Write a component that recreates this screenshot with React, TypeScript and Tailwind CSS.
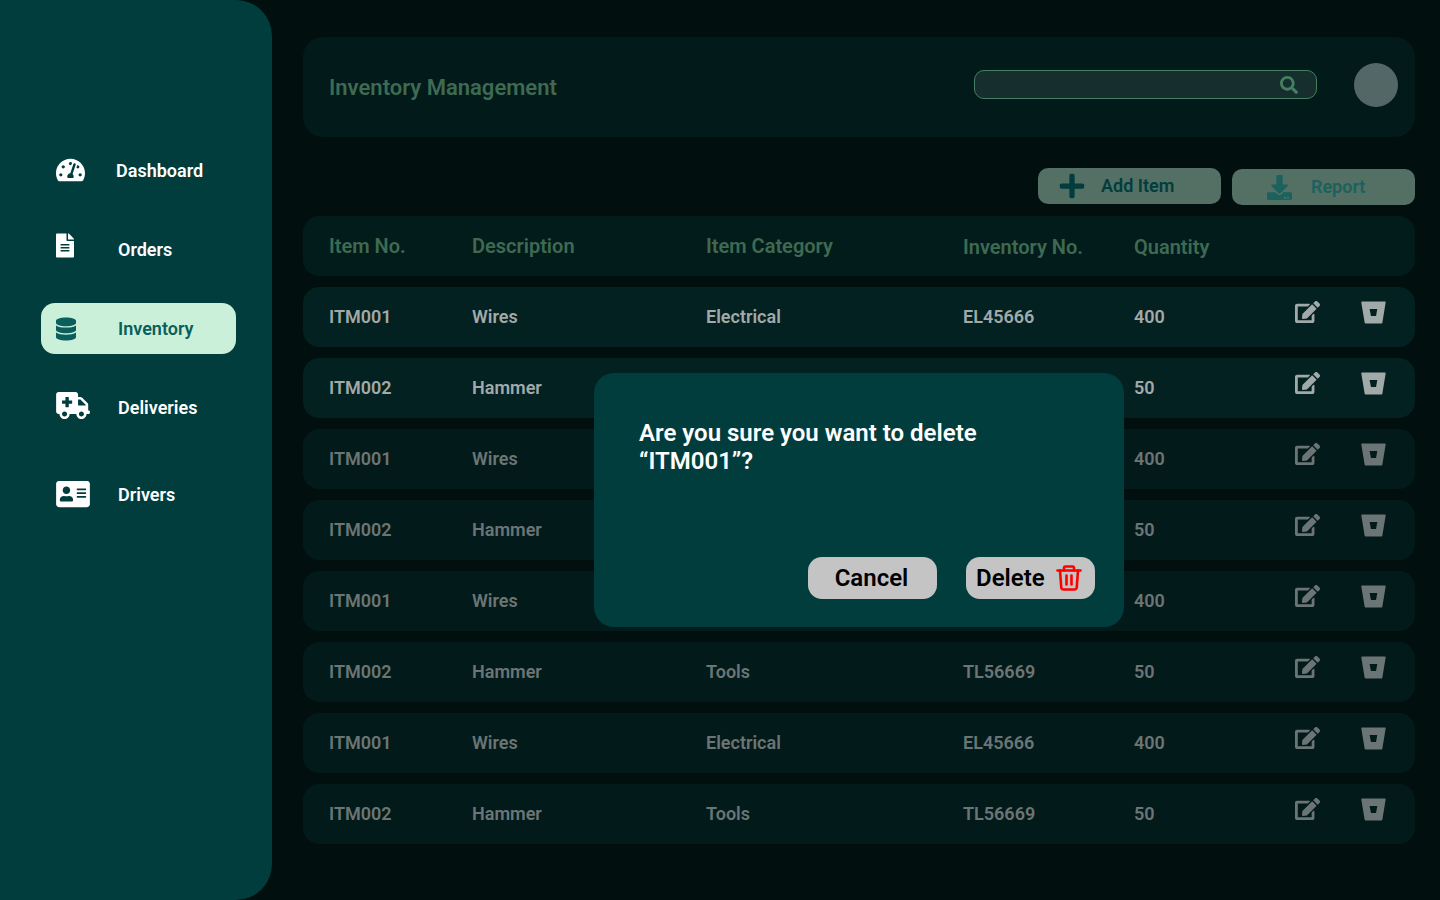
import { FaTachometerAlt, FaFileAlt, FaDatabase, FaAmbulance, FaAddressCard, FaEdit, FaBitbucket, FaPlus, FaDownload, FaSearch } from "react-icons/fa"

const items = [
  { no: "ITM001", desc: "Wires", cat: "Electrical", inv: "EL45666", qty: "400" },
  { no: "ITM002", desc: "Hammer", cat: "Tools", inv: "TL56669", qty: "50" },
]
const rows = Array.from({ length: 8 }, (_, i) => items[i % 2])

function Sidebar() {
  return (
    <aside className="w-[272px] shrink-0 rounded-r-[36px] bg-[#023d3d] pl-[41px] pt-[145px]">
      <nav className="flex w-[195px] flex-col text-[18px] font-semibold text-white">
        <a className="flex h-[51px] items-center pl-[15px]">
          <FaTachometerAlt className="mb-[2px] h-[32px] w-[29px]" />
          <span className="ml-[31px]">Dashboard</span>
        </a>
        <a className="mt-[28px] flex h-[51px] items-center pl-[15px]">
          <FaFileAlt className="mb-[8px] h-[25px] w-[18px]" />
          <span className="ml-[44px]">Orders</span>
        </a>
        <a className="mt-[28px] flex h-[51px] items-center rounded-[14px] bg-[#caf0d9] pl-[15px] text-[#0a5f5c]">
          <FaDatabase className="h-[24px] w-[20px] text-[#0a5f5c]" />
          <span className="ml-[42px]">Inventory</span>
        </a>
        <a className="mt-[28px] flex h-[51px] items-center pl-[15px]">
          <FaAmbulance className="mb-[5px] h-[27px] w-[34px]" />
          <span className="ml-[28px]">Deliveries</span>
        </a>
        <a className="mt-[36px] flex h-[51px] items-center pl-[15px]">
          <FaAddressCard className="mb-[2px] h-[30px] w-[34px]" />
          <span className="ml-[28px]">Drivers</span>
        </a>
      </nav>
    </aside>
  )
}

function Row({ no, desc, cat, inv, qty, bright }: { no: string; desc: string; cat: string; inv: string; qty: string; bright: boolean }) {
  return (
    <div className={`grid h-[60px] grid-cols-[143px_234px_257px_171px_1fr] items-center rounded-[16px] pb-[2px] pl-[26px] text-[18px] font-semibold ${bright ? "bg-[#022120] text-[#a2a9a9]" : "bg-[#021b1a] text-[#6c7575]"}`}>
      <span>{no}</span>
      <span>{desc}</span>
      <span>{cat}</span>
      <span>{inv}</span>
      <div className="flex items-center">
        <span className="w-[161px]">{qty}</span>
        <FaEdit className="mb-[8px] h-[24px] w-[25px]" />
        <FaBitbucket className="mb-[8px] ml-[41px] h-[25px] w-[25px]" />
      </div>
    </div>
  )
}

export default function App() {
  return (
    <div className="relative flex h-screen w-full overflow-hidden bg-[#010f0e] font-['Roboto',sans-serif]">
      <Sidebar />
      <main className="flex-1 pl-[31px] pr-[25px] pt-[37px]">
        <header className="flex h-[100px] items-center rounded-[20px] bg-[#021a1a] pl-[26px] pr-[17px]">
          <h1 className="flex-1 text-[22px] font-semibold text-[#3f6a52]">Inventory Management</h1>
          <div className="mb-[6px] flex h-[29px] w-[343px] items-center justify-end rounded-[10px] border border-[#447f60] bg-[#172e2e] pr-[18px]">
            <FaSearch className="mt-[2px] h-[18px] w-[18px] text-[#447f60]" />
          </div>
          <div className="mb-[4px] ml-[37px] h-[44px] w-[44px] rounded-full bg-[#536766]" />
        </header>

        <div className="mt-[31px] flex items-start justify-end gap-[11px]">
          <button className="flex h-[36px] w-[183px] items-center rounded-[10px] bg-[#546f64] pl-[20px] text-[18px] font-semibold text-[#023d3d]">
            <FaPlus className="h-[28px] w-[28px]" />
            <span className="mb-[2px] ml-[15px]">Add Item</span>
          </button>
          <button className="mt-px flex h-[36px] w-[183px] items-center rounded-[10px] bg-[#546f64] pl-[35px] text-[18px] font-semibold text-[#1b625e]">
            <FaDownload className="h-[25px] w-[25px]" />
            <span className="mb-[2px] ml-[19px]">Report</span>
          </button>
        </div>

        <div className="mt-[11px] flex flex-col gap-[11px]">
          <div className="grid h-[60px] grid-cols-[143px_234px_257px_171px_1fr] items-center rounded-[16px] bg-[#021c1b] pl-[26px] text-[20px] font-semibold text-[#3f6a52]">
            <span>Item No.</span>
            <span>Description</span>
            <span>Item Category</span>
            <span className="mt-[2px]">Inventory No.</span>
            <span className="mt-[2px]">Quantity</span>
          </div>
          {rows.map((r, i) => (
            <Row key={i} {...r} bright={i < 2} />
          ))}
        </div>
      </main>

      {/* delete confirm */}
      <div className="absolute left-[594px] top-[373px] flex h-[254px] w-[530px] flex-col rounded-[20px] bg-[#023d3d] pb-[28px] pl-[45px] pr-[29px] pt-[46px]">
        <p className="text-[24px] leading-[28px] font-semibold text-white">
          Are you sure you want to delete
          <br />
          “ITM001”?
        </p>
        <div className="mt-auto flex justify-end gap-[29px] text-[24px] font-semibold text-black">
          <button className="flex h-[42px] w-[129px] items-center justify-center rounded-[14px] bg-[#c4c4c4] pr-[2px]">Cancel</button>
          <button className="flex h-[42px] w-[129px] items-center rounded-[14px] bg-[#c4c4c4] pl-[10px]">
            Delete
            <svg className="ml-[11px] h-[26px] w-[26px]" viewBox="0 0 26 26" fill="none" stroke="#ff0000" strokeWidth="2.6" strokeLinecap="round" strokeLinejoin="round">
              <path d="M1.5 5.5h23" />
              <path d="M8 5.5V3a1.5 1.5 0 0 1 1.5-1.5h7A1.5 1.5 0 0 1 18 3v2.5" />
              <path d="M4 5.5l1.3 17.5a2 2 0 0 0 2 1.5h11.4a2 2 0 0 0 2-1.5L22 5.5" />
              <path d="M10.5 10.5v9" />
              <path d="M15.5 10.5v9" />
            </svg>
          </button>
        </div>
      </div>
    </div>
  )
}
